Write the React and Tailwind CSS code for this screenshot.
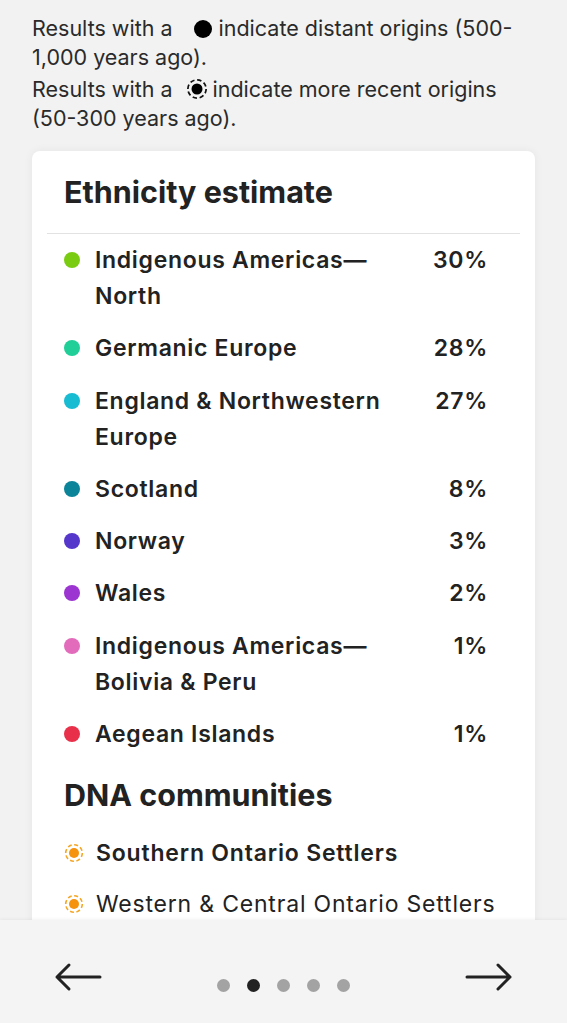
const ethnicities = [
  { name: "Indigenous Americas—North", pct: "30%", color: "bg-[#7acc12]" },
  { name: "Germanic Europe", pct: "28%", color: "bg-[#1fcf97]" },
  { name: "England & Northwestern Europe", pct: "27%", color: "bg-[#17bbd2]" },
  { name: "Scotland", pct: "8%", color: "bg-[#0b8499]" },
  { name: "Norway", pct: "3%", color: "bg-[#5637cc]" },
  { name: "Wales", pct: "2%", color: "bg-[#9b34d1]" },
  { name: "Indigenous Americas—Bolivia & Peru", pct: "1%", color: "bg-[#e26cbb]" },
  { name: "Aegean Islands", pct: "1%", color: "bg-[#e8304a]" },
];

const communities = [
  { name: "Southern Ontario Settlers", bold: true },
  { name: "Western & Central Ontario Settlers", bold: false },
];

function RecentIcon({ color = "#f5a623", dot = "#f5930f", size = 20 }) {
  return (
    <svg width={size} height={size} viewBox="0 0 20 20" className="shrink-0">
      <circle cx="10" cy="10" r="8.3" fill="none" stroke={color} strokeWidth="1.6" strokeDasharray="4 2.5" />
      <circle cx="10" cy="10" r="5" fill={dot} />
    </svg>
  );
}

function Arrow({ dir }) {
  return (
    <svg width="50" height="30" viewBox="0 0 50 30" className={dir === "left" ? "" : "rotate-180"}>
      <path d="M47 15H4M16 3L4 15l12 12" fill="none" stroke="#222" strokeWidth="3" strokeLinecap="round" strokeLinejoin="round" />
    </svg>
  );
}

export default function App() {
  return (
    <div className="w-[567px] h-[1023px] bg-[#f2f2f2] flex flex-col overflow-hidden text-[#222] font-['Inter',sans-serif]">
      <div className="flex-1 overflow-hidden">
        <div className="px-8 pt-[14px] text-[21.5px] leading-[29px] text-[#2a2a2a]">
          <p>
            Results with a
            <span className="inline-block w-[18px] h-[18px] rounded-full bg-black align-[-2px] ml-[21px] mr-[7px]" />
            indicate distant origins (500-1,000 years ago).
          </p>
          <p className="mt-[3px]">
            Results with a
            <span className="inline-block align-[-3px] ml-[13px] mr-[5px]">
              <RecentIcon color="#111" dot="#000" size={22} />
            </span>
            indicate more recent origins (50-300 years ago).
          </p>
        </div>

        <div className="mx-8 mt-[18px] bg-white rounded-t-lg shadow-[0_0_10px_rgba(0,0,0,0.06)] px-[15px] pt-[23px] pb-10">
          <h2 className="px-[17px] text-[30.5px] leading-[36px] font-bold text-[#222]">Ethnicity estimate</h2>
          <div className="mt-[23px] border-t border-[#e2e2e2]" />
          <ul className="pt-[8px] px-[17px] flex flex-col gap-[16.3px]">
            {ethnicities.map((e) => (
              <li key={e.name} className="flex items-start text-[23px] leading-[36px] font-semibold tracking-[0.03em]">
                <span className={`w-4 h-4 rounded-full shrink-0 mt-[10px] ${e.color}`} />
                <span className="ml-[15px] flex-1 min-w-0">{e.name}</span>
                <span className="w-[80px] text-right pr-[15px] shrink-0">{e.pct}</span>
              </li>
            ))}
          </ul>
          <h2 className="px-[17px] mt-[25px] text-[30.5px] leading-[36px] font-bold">DNA communities</h2>
          <ul className="mt-[22px] px-[17px] flex flex-col gap-[15px]">
            {communities.map((c) => (
              <li key={c.name} className={`flex items-center gap-[12px] text-[23px] leading-[36px] tracking-[0.035em] ${c.bold ? "font-semibold" : "font-normal"}`}>
                <RecentIcon />
                <span>{c.name}</span>
              </li>
            ))}
          </ul>
        </div>
      </div>

      <div className="h-[103px] shrink-0 bg-[#f4f4f4] shadow-[0_-1px_3px_rgba(0,0,0,0.05)] relative flex items-start justify-between px-[53px] pt-[42px]">
        <Arrow dir="left" />
        <div className="flex items-center gap-[17px] mt-[17px]">
          <span className="w-[13px] h-[13px] rounded-full bg-[#a3a3a3]" />
          <span className="w-[13px] h-[13px] rounded-full bg-[#222]" />
          <span className="w-[13px] h-[13px] rounded-full bg-[#a3a3a3]" />
          <span className="w-[13px] h-[13px] rounded-full bg-[#a3a3a3]" />
          <span className="w-[13px] h-[13px] rounded-full bg-[#a3a3a3]" />
        </div>
        <Arrow dir="right" />
      </div>
    </div>
  );
}
